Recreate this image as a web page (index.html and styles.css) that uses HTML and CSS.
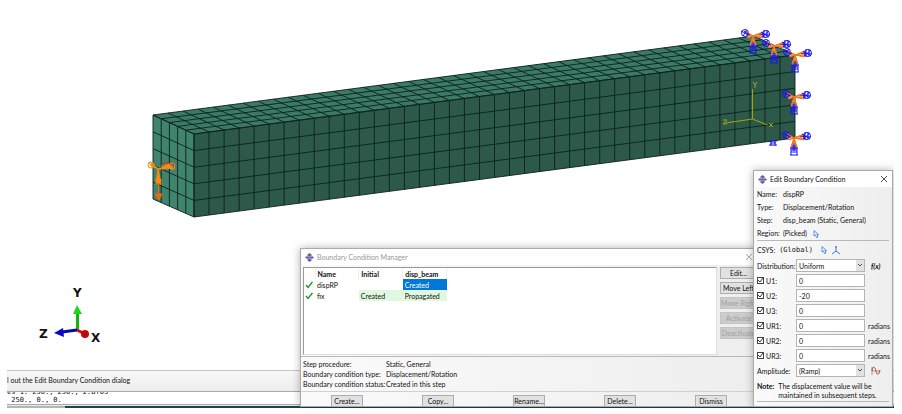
FILE: index.html
```html
<!DOCTYPE html>
<html lang="en">

<head>

    <meta charset="UTF-8">
    <meta name="viewport" content="width=device-width, initial-scale=1.0">
    <title>Boundary Conditions</title>

    <link rel="stylesheet" href="styles.css">

</head>

<body>

    <!-- shared drawings -->
    <svg class="defs" width="0" height="0" aria-hidden="true">
        <defs>
            <symbol id="logo" viewBox="0 0 18 18">
                <path fill="#6663a8" d="M9 0l5 4-2 2h2l4 3-4 3h-2l2 2-5 4-5-4 2-2H4L0 9l4-3h2L4 4z" />
                <path stroke="#d5d3ec" stroke-width="1" d="M4 7h10M4 11h10" />
            </symbol>
            <symbol id="cursor" viewBox="0 0 12 16">
                <path fill="#eef5ff" stroke="#3b7be0" stroke-width="1.6" d="M2 1v11l3-2 2 5 3-1-2-5h3z" />
            </symbol>
            <symbol id="close" viewBox="0 0 8 8">
                <path fill="none" stroke="currentColor" stroke-width="0.8" d="M1 1l6 6M7 1L1 7" />
            </symbol>
            <symbol id="check" viewBox="0 0 8 8">
                <path fill="none" stroke="#159a2b" stroke-width="1.4" d="M1 4l2 2.500L7.500 1" />
            </symbol>
            <g id="cones" fill="none" stroke="#f5761a" stroke-width="1">
                <path fill="#f7a25c" d="M0 0l-8-5 3 7zM0 0l10-4v6zM0 0l-3 10h6z" />
                <g stroke="#1616f0" stroke-width="1">
                    <circle cx="-8" cy="-3" r="3.500" />
                    <path d="M-12-5l8 4M-10 0l4-6M-9-5l5 4M-6-2l3 1" />
                    <circle cx="13" cy="-2" r="3.500" />
                    <path d="M6-2l11 1M9 1l7-6M11-6v8M14-6v7M8-4l8 5" />
                    <path d="M-4 10h8M-3 12h6M-3 14h6M-4 17h8M-3 10v7M3 10v7M0 5v8M-1 7v5M1 7v5" />
                </g>
                <path d="M-6-4L0 0l8-3M0 0l8 1M0 0v6M0 0l-3 9M0 0l3 9" />
            </g>
        </defs>
    </svg>

    <main class="desktop">

        <div class="viewport">

            <svg class="scene" width="887" height="370" viewBox="7 0 887 370">

                <path fill="#3b7a66" d="M153 115L754 36L795 55L194 134z" />
                <path fill="#41846d" d="M153 115L194 134V217L153 199z" />
                <path fill="#2d594b" d="M194 134L795 55V138L194 217z" />
                <path id="mesh" class="mesh" />

                <!-- datum csys -->
                <g stroke="#a6a60c" fill="none">
                    <path d="M752.500 89v30l-27 4M752.500 119l15 6" />
                    <path d="M753 82l2 3 2-3M755 85v3M723 120h4l-4 4h4M769 123l4 4M773 123l-4 4" />
                </g>

                <use href="#cones" x="753" y="36" />
                <use href="#cones" x="774" y="46" />
                <use href="#cones" x="795" y="55" />
                <use href="#cones" x="794" y="97" />
                <use href="#cones" x="794" y="138" />
                <path stroke="#1616f0" d="M769 141h8M770 143h6M769 145h8M771 140v6M775 140v6" />

                
                <path fill="none" stroke="#f01c1c" d="M164 167v-4h10v4" />
                <g fill="#f98a10" stroke="#f98a10">
                    <path d="M158 169l-7-3v-2zM159 169l10-5 3 4z" />
                    <circle cx="151" cy="165" r="3" fill="none" />
                    <circle cx="172" cy="166" r="3" fill="none" />
                    <path fill="none" d="M148 163l11 6M150 162l8 7M159 169l16-1M161 166h12M165 164l8 6" />
                    <path d="M158 169l-2 14h5z" />
                    <path d="M155 180h7M155 184h7" />
                    <path stroke="#f5660c" fill="#f5660c" d="M158.500 183v11M155 194h7l-3 6z" />
                </g>

                <!-- view triad -->
                <g class="triad">
                    <path stroke="#10b510" stroke-width="3" d="M77.500 330v-18" />
                    <path fill="#20d520" d="M73 314l4-9 5 9z" />
                    <path stroke="#0808a8" stroke-width="3" d="M77 330l-15 2" />
                    <path fill="#0808c8" d="M54 333l9-5 1 9z" />
                    <path stroke="#d80808" stroke-width="3" d="M77 330l6 3" />
                    <circle fill="#c00808" cx="85" cy="334" r="4" />
                    <text x="73" y="297">Y</text>
                    <text x="39" y="338">Z</text>
                    <text x="91" y="342">X</text>
                </g>

            </svg>

        </div>

        <div class="prompt">l out the Edit Boundary Condition dialog</div>

        <pre class="console">es 1: 250., 250., 2.Bf03
 250., 0., 0.</pre>

        <div class="taskbar"></div>

        <section class="window manager">

            <header class="title-bar">
                <svg class="logo"><use href="#logo" /></svg>
                <h2>Boundary Condition Manager</h2>
                <button class="close-btn" aria-label="Close"><svg><use href="#close" /></svg></button>
            </header>

            <div class="manager-main">

                <div class="list">
                    <table>
                        <thead>
                            <tr>
                                <th class="tick"></th>
                                <th>Name</th>
                                <th>Initial</th>
                                <th>disp_beam</th>
                            </tr>
                        </thead>
                        <tbody>
                            <tr>
                                <td class="tick"><svg><use href="#check" /></svg></td>
                                <td>dispRP</td>
                                <td></td>
                                <td class="selected">Created</td>
                            </tr>
                            <tr>
                                <td class="tick"><svg><use href="#check" /></svg></td>
                                <td>fix</td>
                                <td class="active">Created</td>
                                <td class="active">Propagated</td>
                            </tr>
                        </tbody>
                    </table>
                </div>

                <div class="side-buttons">
                    <button>Edit...</button>
                    <button>Move Left</button>
                    <button disabled>Move Right</button>
                    <button disabled>Activate</button>
                    <button disabled>Deactivate</button>
                </div>

            </div>

            <dl class="details">
                <dt>Step procedure:</dt>
                <dd>Static, General</dd>
                <dt>Boundary condition type:</dt>
                <dd>Displacement/Rotation</dd>
                <dt>Boundary condition status:</dt>
                <dd>Created in this step</dd>
            </dl>

            <div class="bottom-buttons">
                <button>Create...</button>
                <button>Copy...</button>
                <button>Rename...</button>
                <button>Delete...</button>
                <button>Dismiss</button>
            </div>

        </section>

        <section class="window editor">

            <header class="title-bar">
                <svg class="logo"><use href="#logo" /></svg>
                <h2>Edit Boundary Condition</h2>
                <button class="close-btn" aria-label="Close"><svg><use href="#close" /></svg></button>
            </header>

            <dl class="summary">
                <dt>Name:</dt>
                <dd>dispRP</dd>
                <dt>Type:</dt>
                <dd>Displacement/Rotation</dd>
                <dt>Step:</dt>
                <dd>disp_beam (Static, General)</dd>
                <dt>Region:</dt>
                <dd>(Picked) <svg class="cursor"><use href="#cursor" /></svg></dd>
            </dl>

            <div class="csys">
                <span>CSYS:</span>
                <code>(Global)</code>
                <svg class="cursor"><use href="#cursor" /></svg>
                <svg class="axes" viewBox="0 0 10 10"><path fill="none" stroke="#3b7be0" d="M5 1v5L1 9M5 6l4 3M4 2h2" /></svg>
            </div>

            <div class="fields">

                <label for="distribution">Distribution:</label>
                <select id="distribution"><option>Uniform</option></select>
                <i class="fx">f(x)</i>

                <label><input type="checkbox" checked> U1:</label>
                <input type="text" aria-label="U1" value="0">
                <span></span>

                <label><input type="checkbox" checked> U2:</label>
                <input type="text" aria-label="U2" value="-20">
                <span></span>

                <label><input type="checkbox" checked> U3:</label>
                <input type="text" aria-label="U3" value="0">
                <span></span>

                <label><input type="checkbox" checked> UR1:</label>
                <input type="text" aria-label="UR1" value="0">
                <span>radians</span>

                <label><input type="checkbox" checked> UR2:</label>
                <input type="text" aria-label="UR2" value="0">
                <span>radians</span>

                <label><input type="checkbox" checked> UR3:</label>
                <input type="text" aria-label="UR3" value="0">
                <span>radians</span>

                <label for="amplitude">Amplitude:</label>
                <select id="amplitude"><option>(Ramp)</option></select>
                <svg class="wave" viewBox="0 0 10 10"><path fill="none" stroke="#666" stroke-width="0.6" d="M1 9V1M1 5h8" /><path fill="none" stroke="#c03a3a" d="M1 5C1 0 4 0 5 5S8 9 9 4" /></svg>

            </div>

            <p class="note"><b>Note:</b><span>The displacement value will be<br>maintained in subsequent steps.</span></p>

        </section>

    </main>

    <script src="mesh.js"></script>

</body>

</html>
```

FILE: styles.css
```css
* {
    box-sizing: border-box;
}

body {
    margin: 0;
    background-color: #fff;
    color: #111;
    font-family: Lato, "Open Sans", sans-serif;
    font-size: 7px;
    line-height: 10px;
}

.defs {
    position: absolute;
}

.desktop {
    position: relative;
    display: flex;
    flex-direction: column;
    height: calc(100vh - 6px);
    margin: 0 8px 0 7px;
    overflow: hidden;
}

.viewport {
    flex: 1;
    min-height: 0;
    overflow: hidden;
}

.scene {
    display: block;
}

.mesh {
    fill: none;
    stroke: #0c211a;
    stroke-width: 1;
    stroke-opacity: 0.9;
}

.triad text {
    font-family: "DejaVu Sans", sans-serif;
    font-size: 12px;
    font-weight: bold;
    fill: #111;
}

.prompt {
    height: 21px;
    padding: 4px 0;
    border-top: 1px solid #c4c4c4;
    background: linear-gradient(#f7f7f7, #ededed);
}

.console {
    display: flex;
    align-items: flex-end;
    height: 14px;
    margin: 0;
    border: 1px solid #aaa;
    border-width: 1px 0;
    overflow: hidden;
    font-family: "DejaVu Sans Mono", monospace;
    font-size: 7px;
    line-height: 8px;
}

.taskbar {
    height: 3px;
    border-top: 1px solid #e8e8e8;
    background: linear-gradient(to right, #b5b5b5 58px, #24404a 58px);
}

.window {
    position: absolute;
    background: linear-gradient(to right, #fafafa, #eee);
    border: 1px solid #aaa;
    box-shadow: 0 0 8px rgba(0, 0, 0, 0.3);
}

.title-bar {
    display: flex;
    align-items: center;
    gap: 3px;
    height: 16px;
    padding: 0 4px;
    background-color: #fff;
}

.title-bar h2 {
    flex: 1;
    margin: 0;
    font-size: 7px;
    font-weight: normal;
}

.logo {
    width: 9px;
    height: 9px;
}

.close-btn {
    display: flex;
    padding: 0;
    border: none;
    background: none;
    color: #222;
}

.close-btn svg {
    width: 8px;
    height: 8px;
}

.manager {
    top: 248px;
    left: 293px;
    width: 458px;
    height: 159px;
}

.manager h2,
.manager .close-btn {
    color: #999;
}

.manager-main {
    display: flex;
    gap: 3px;
    padding: 2px 0 1px 2px;
    border-bottom: 1px solid #b8b8b8;
}

.list {
    flex: 1;
    height: 88px;
    border: 1px solid #999;
    border-right-color: #ddd;
    border-bottom-color: #ddd;
    background-color: #fff;
}

table {
    border-collapse: collapse;
    table-layout: fixed;
    width: 143px;
}

th, td {
    height: 11px;
    padding: 0 2px;
    text-align: left;
    line-height: 10px;
}

th {
    border-right: 1px solid #eee;
}

.tick {
    width: 11px;
    padding: 0 1px;
}

.tick svg {
    display: block;
    width: 8px;
    height: 8px;
}

.selected {
    background-color: #0078d7;
    color: #fff;
}

.active {
    background-color: #e0f8e0;
}

button {
    font: inherit;
}

.side-buttons {
    display: flex;
    flex-direction: column;
    gap: 3px;
    width: 37px;
}

.side-buttons button,
.bottom-buttons button {
    height: 12px;
    padding: 0;
    border: 1px solid #adadad;
    background-color: #e1e1e1;
    color: #111;
    line-height: 9px;
    white-space: nowrap;
}

.side-buttons button:disabled {
    background-color: #ccc;
    border-color: #c4c4c4;
    color: #a0a0a0;
}

.details {
    display: grid;
    grid-template-columns: 83px 1fr;
    margin: 0;
    padding: 2px;
    border-bottom: 1px solid #d0d0d0;
    white-space: nowrap;
}

dd {
    margin: 0;
}

.bottom-buttons {
    display: flex;
    justify-content: space-between;
    padding: 3px 30px 0;
}

.bottom-buttons button {
    width: 32px;
}

.editor {
    top: 170px;
    right: 1px;
    width: 140px;
    height: 237px;
}

.summary {
    display: grid;
    grid-template-columns: 26px 1fr;
    row-gap: 3px;
    margin: 0 3px;
    padding: 2px 0 2px;
    border-bottom: 1px solid #b8b8b8;
}

.cursor {
    width: 6px;
    height: 8px;
    margin-left: 4px;
    vertical-align: middle;
}

.csys {
    display: flex;
    align-items: center;
    gap: 4px;
    height: 18px;
    padding: 0 3px;
}

.csys code {
    font-family: "DejaVu Sans Mono", monospace;
}

.axes,
.wave {
    width: 10px;
    height: 10px;
}

.fields {
    display: grid;
    grid-template-columns: 38px 69px 1fr;
    grid-auto-rows: 13px;
    row-gap: 2px;
    column-gap: 1px;
    align-items: center;
    padding-left: 3px;
}

.fields label {
    display: flex;
    align-items: center;
    gap: 2px;
    white-space: nowrap;
}

.fields input[type="text"],
.fields select {
    width: 100%;
    height: 13px;
    padding: 0 2px;
    border: 1px solid #b4b4b4;
    border-radius: 0;
    background-color: #fff;
    color: #111;
    font: inherit;
}

.fields select {
    appearance: none;
    background: url("data:image/svg+xml,%3Csvg xmlns='http://www.w3.org/2000/svg' width='8' height='11'%3E%3Crect width='8' height='11' fill='%23e1e1e1'/%3E%3Cpath d='M2 4l2 2 2-2' fill='none' stroke='%23555'/%3E%3C/svg%3E") right center no-repeat #fff;
}

.fields input[type="checkbox"] {
    appearance: none;
    width: 7px;
    height: 7px;
    margin: 0;
    border: 1px solid #444;
    background: url("data:image/svg+xml,%3Csvg xmlns='http://www.w3.org/2000/svg' width='5' height='5'%3E%3Cpath d='M0 2l2 2 3-4' fill='none' stroke='%23333'/%3E%3C/svg%3E") center no-repeat #fff;
}

.fields span {
    margin-left: 2px;
}

.fields .fx,
.wave {
    margin-left: 5px;
}

.fx {
    font-weight: bold;
}

.note {
    display: flex;
    gap: 4px;
    margin: 5px 3px 0;
    padding-bottom: 1px;
    border-bottom: 1px solid #b8b8b8;
    line-height: 9px;
}
```

FILE: mesh.js
```js
const columns = 40;
const rows = 5;
let d = '';

const line = (x1, y1, x2, y2) => {
    d += `M${x1.toFixed(1)} ${y1.toFixed(1)}L${x2.toFixed(1)} ${y2.toFixed(1)}`;
};

// element columns along the beam: front face, then across the top
for (let i = 0; i <= columns; i++) {
    const x = 194 + 601 * i / columns;
    const y = 134 - 79 * i / columns;
    line(x, y, x, y + 83);
    line(x, y, x - 41, y - 19);
}

for (let j = 0; j <= rows; j++) {
    const t = j / rows;
    line(194, 134 + 83 * t, 795, 55 + 83 * t);
    line(153 + 41 * t, 115 + 19 * t, 754 + 41 * t, 36 + 19 * t);
    line(153, 115 + 84 * t, 194, 134 + 83 * t);
    line(153 + 41 * t, 115 + 19 * t, 153 + 41 * t, 199 + 18 * t);
}

document.getElementById('mesh').setAttribute('d', d);
```
